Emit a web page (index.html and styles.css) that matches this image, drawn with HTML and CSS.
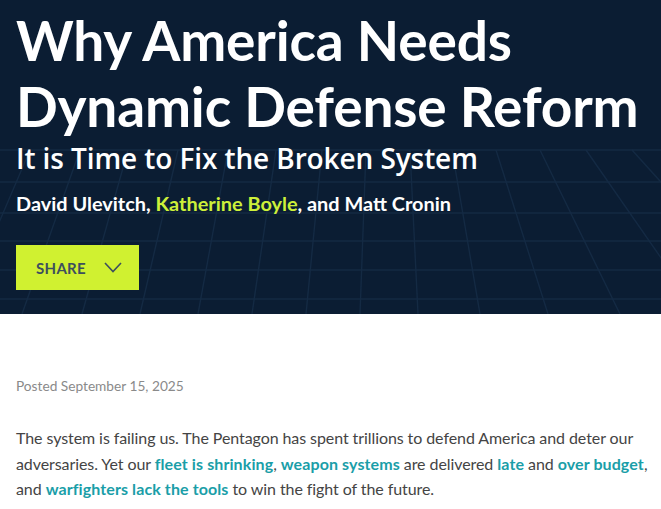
FILE: index.html
```html
<!DOCTYPE html>
<html lang="en">
<head>
<meta charset="utf-8">
<title>Why America Needs Dynamic Defense Reform</title>
<link rel="stylesheet" href="styles.css">
</head>
<body>
<header class="hero">
  <svg class="grid" viewBox="0 0 661 314" preserveAspectRatio="none" aria-hidden="true">
    <g stroke="#18304b" stroke-width="1.4" fill="none">
      <line x1="0" y1="150" x2="661" y2="150"/>
      <line x1="0" y1="182" x2="661" y2="182"/>
      <line x1="0" y1="213" x2="661" y2="213"/>
      <line x1="0" y1="241" x2="661" y2="241"/>
      <line x1="0" y1="270" x2="661" y2="270"/>
      <line x1="0" y1="299" x2="661" y2="299"/>
      <line x1="-40" y1="314" x2="30" y2="150"/>
      <line x1="22" y1="314" x2="80" y2="150"/>
      <line x1="82" y1="314" x2="128" y2="150"/>
      <line x1="140" y1="314" x2="178" y2="150"/>
      <line x1="198" y1="314" x2="228" y2="150"/>
      <line x1="252" y1="314" x2="276" y2="150"/>
      <line x1="306" y1="314" x2="322" y2="150"/>
      <line x1="360" y1="314" x2="366" y2="150"/>
      <line x1="418" y1="314" x2="410" y2="150"/>
      <line x1="480" y1="314" x2="452" y2="150"/>
      <line x1="548" y1="314" x2="496" y2="150"/>
      <line x1="620" y1="314" x2="540" y2="150"/>
      <line x1="700" y1="314" x2="586" y2="150"/>
      <line x1="780" y1="314" x2="632" y2="150"/>
    </g>
  </svg>
  <div class="hero-inner">
    <h1 class="title">Why America Needs<br>Dynamic Defense Reform</h1>
    <p class="subtitle">It is Time to Fix the Broken System</p>
    <p class="authors">David Ulevitch, <a class="author-link" href="#">Katherine Boyle</a>, and Matt Cronin</p>
    <button class="share" type="button">
      <span class="share-label">SHARE</span>
      <svg class="chev" viewBox="0 0 18 11" aria-hidden="true"><path d="M1 1 L9 9.5 L17 1" fill="none" stroke="#3d4f5e" stroke-width="1.6"/></svg>
    </button>
  </div>
</header>
<main class="content">
  <p class="posted">Posted September 15, 2025</p>
  <p class="body">The system is failing us. The Pentagon has spent trillions to defend America and deter our<br>adversaries. Yet our <a href="#" class="lnk">fleet is shrinking</a>, <a href="#" class="lnk">weapon systems</a> are delivered <a href="#" class="lnk">late</a> and <a href="#" class="lnk">over budget</a>,<br>and <a href="#" class="lnk">warfighters lack the tools</a> to win the fight of the future.</p>
</main>
</body>
</html>
```
FILE: styles.css
```css
* { box-sizing: border-box; }
html, body { margin: 0; padding: 0; }
body {
  background: #ffffff;
  font-family: Lato, "Noto Sans", sans-serif;
  width: 661px;
  overflow: hidden;
}
.hero {
  position: relative;
  background: #0b1d33;
  height: 314px;
  overflow: hidden;
}
.grid {
  position: absolute;
  left: 0; top: 0;
  width: 100%; height: 100%;
  opacity: 0.7;
}
.hero-inner {
  position: relative;
  padding: 7px 16px 0;
  display: flex;
  flex-direction: column;
  align-items: flex-start;
}
.title {
  margin: 0;
  color: #ffffff;
  font-weight: 700;
  font-size: 55px;
  line-height: 66px;
  letter-spacing: -0.15px;
  white-space: nowrap;
}
.subtitle {
  margin: 3px 0 0;
  color: #ffffff;
  font-family: "Open Sans", Lato, sans-serif;
  font-weight: 600;
  font-size: 28px;
  line-height: 32px;
  letter-spacing: -0.1px;
  white-space: nowrap;
}
.authors {
  margin: 17px 0 0;
  color: #ffffff;
  font-weight: 700;
  font-size: 19.9px;
  line-height: 24px;
  white-space: nowrap;
}
.author-link { color: #cdf03a; text-decoration: none; }
.share {
  margin-top: 30.4px;
  width: 123px;
  height: 45px;
  background: #d0f130;
  border: 0;
  padding: 0 0 0 20px;
  display: flex;
  align-items: center;
  gap: 18px;
  font-family: inherit;
  cursor: pointer;
}
.share-label {
  color: #3d4f5e;
  font-weight: 700;
  font-size: 15px;
  letter-spacing: 0.3px;
}
.chev { width: 18px; height: 11px; }
.content {
  padding: 63.7px 16px 0;
}
.posted {
  margin: 0;
  color: #8a8a8a;
  font-size: 13.7px;
  line-height: 16px;
}
.body {
  margin: 31.6px 0 0;
  color: #444444;
  font-size: 16px;
  line-height: 25.5px;
  letter-spacing: -0.08px;
  white-space: nowrap;
}
.lnk { color: #1a9ea8; font-weight: 700; text-decoration: none; letter-spacing: 0.1px; }
```
